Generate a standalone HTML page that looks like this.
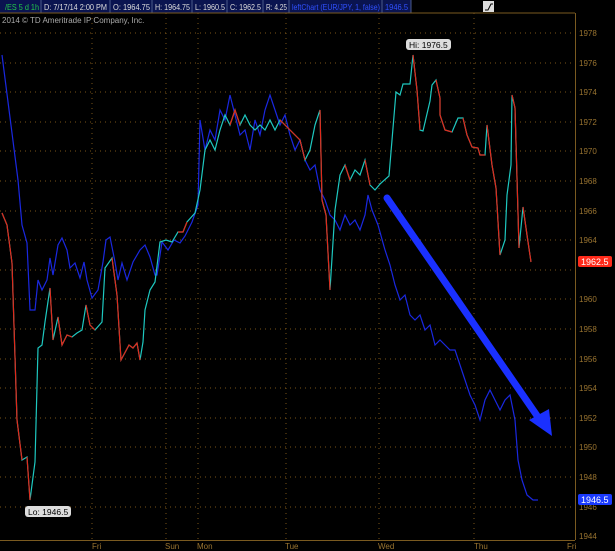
<!DOCTYPE html>
<html><head><style>
body{margin:0;background:#000;width:615px;height:551px;overflow:hidden;font-family:"Liberation Sans",sans-serif}
</style></head><body>
<svg width="615" height="551" xmlns="http://www.w3.org/2000/svg" style="position:absolute;left:0;top:0">
<rect width="615" height="551" fill="#000"/>
<!-- header -->
<rect x="0" y="0" width="411" height="13" fill="#0a1450"/>
<g stroke="#4a5a8a" stroke-width="1"><line x1="41" y1="0" x2="41" y2="13"/><line x1="110" y1="0" x2="110" y2="13"/><line x1="152" y1="0" x2="152" y2="13"/><line x1="192" y1="0" x2="192" y2="13"/><line x1="227" y1="0" x2="227" y2="13"/><line x1="263" y1="0" x2="263" y2="13"/><line x1="289" y1="0" x2="289" y2="13"/><line x1="382" y1="0" x2="382" y2="13"/><line x1="411" y1="0" x2="411" y2="13"/></g>
<g font-size="8.5" fill="#ddd">
<text x="5" y="10" fill="#22c84a" textLength="34" lengthAdjust="spacingAndGlyphs">/ES 5 d 1h</text>
<text x="44" y="10" textLength="63" lengthAdjust="spacingAndGlyphs">D: 7/17/14 2:00 PM</text>
<text x="113" y="10" textLength="37" lengthAdjust="spacingAndGlyphs">O: 1964.75</text>
<text x="155" y="10" textLength="35" lengthAdjust="spacingAndGlyphs">H: 1964.75</text>
<text x="195" y="10" textLength="30" lengthAdjust="spacingAndGlyphs">L: 1960.5</text>
<text x="230" y="10" textLength="31" lengthAdjust="spacingAndGlyphs">C: 1962.5</text>
<text x="266" y="10" textLength="21" lengthAdjust="spacingAndGlyphs">R: 4.25</text>
<text x="292" y="10" fill="#3050ff" textLength="88" lengthAdjust="spacingAndGlyphs">leftChart (EUR/JPY, 1, false)</text>
<text x="385" y="10" fill="#3050ff" textLength="23" lengthAdjust="spacingAndGlyphs">1946.5</text>
</g>
<rect x="483" y="1" width="11" height="11" fill="#ddd"/><path d="M485 10 L488 10 L491 4 L493 4" stroke="#000" fill="none"/>
<line x1="0" y1="13" x2="575" y2="13" stroke="#7a5a20"/>
<text x="2" y="23" font-size="8" fill="#aaa">2014 © TD Ameritrade IP Company, Inc.</text>
<!-- grid -->
<g stroke="#7a5418" stroke-dasharray="1,4" stroke-width="1">
<line x1="0" y1="33" x2="575" y2="33"/><line x1="0" y1="63" x2="575" y2="63"/><line x1="0" y1="92" x2="575" y2="92"/><line x1="0" y1="122" x2="575" y2="122"/><line x1="0" y1="151" x2="575" y2="151"/><line x1="0" y1="181" x2="575" y2="181"/><line x1="0" y1="211" x2="575" y2="211"/><line x1="0" y1="240" x2="575" y2="240"/><line x1="0" y1="270" x2="575" y2="270"/><line x1="0" y1="299" x2="575" y2="299"/><line x1="0" y1="329" x2="575" y2="329"/><line x1="0" y1="359" x2="575" y2="359"/><line x1="0" y1="388" x2="575" y2="388"/><line x1="0" y1="418" x2="575" y2="418"/><line x1="0" y1="447" x2="575" y2="447"/><line x1="0" y1="477" x2="575" y2="477"/><line x1="0" y1="507" x2="575" y2="507"/>
<line x1="92" y1="13" x2="92" y2="540"/><line x1="166" y1="13" x2="166" y2="540"/><line x1="198" y1="13" x2="198" y2="540"/><line x1="286" y1="13" x2="286" y2="540"/><line x1="379" y1="13" x2="379" y2="540"/><line x1="474" y1="13" x2="474" y2="540"/>
</g>
<!-- axis -->
<line x1="575.5" y1="13" x2="575.5" y2="540" stroke="#7a5a20"/>
<line x1="0" y1="540.5" x2="575" y2="540.5" stroke="#7a5a20"/>
<g font-size="8" fill="#9a7430">
<text x="579" y="36">1978</text><text x="579" y="66">1976</text><text x="579" y="95">1974</text><text x="579" y="125">1972</text><text x="579" y="154">1970</text><text x="579" y="184">1968</text><text x="579" y="214">1966</text><text x="579" y="243">1964</text><text x="579" y="302">1960</text><text x="579" y="332">1958</text><text x="579" y="362">1956</text><text x="579" y="391">1954</text><text x="579" y="421">1952</text><text x="579" y="450">1950</text><text x="579" y="480">1948</text><text x="579" y="510">1946</text><text x="579" y="539">1944</text>
<text x="92" y="549">Fri</text><text x="165" y="549">Sun</text><text x="197" y="549">Mon</text><text x="285" y="549">Tue</text><text x="378" y="549">Wed</text><text x="474" y="549">Thu</text><text x="567" y="549">Fri</text>
</g>
<rect x="578" y="256" width="34" height="11" rx="2" fill="#ff2a1a"/><text x="581" y="265" font-size="9" fill="#fff">1962.5</text>
<rect x="578" y="494" width="34" height="11" rx="2" fill="#1a3aff"/><text x="581" y="503" font-size="9" fill="#fff">1946.5</text>
<!-- blue line -->
<polyline fill="none" stroke="#1a28e0" stroke-width="1.2" points="2,55 18,180 22,225 27,243 30,310 35,310 38,280 42,290 47,280 50,258 53,275 58,245 62,238 67,250 70,268 75,263 80,278 84,262 87,280 92,298 98,290 103,262 106,240 110,237 115,262 118,280 122,263 127,280 133,262 140,250 145,245 150,257 155,275 157,275 162,242 168,250 174,240 180,243 185,236 192,222 198,205 200,120 205,150 210,130 215,140 220,110 225,120 230,95 235,115 240,135 245,130 250,150 255,120 260,135 265,110 270,95 275,110 280,125 285,115 290,135 295,150 300,140 305,160 310,170 315,165 320,190 325,200 330,215 335,220 340,230 345,215 350,225 355,220 360,230 365,215 368,195 372,210 378,225 385,250 390,265 395,285 400,300 405,295 410,315 415,320 420,315 425,330 430,325 435,345 440,340 445,345 450,350 455,350 460,365 465,380 470,395 475,405 480,420 485,400 490,390 495,400 500,410 505,400 510,395 515,420 518,460 522,480 527,495 533,500 538,500"/>
<!-- price line -->
<polyline fill="none" stroke="#1ec8c0" stroke-width="1.2" points="2,213 7,225 12,263 17,420 22,460 27,457 30,500 35,462 38,348 42,345 45,322 50,288 53,340 58,317 62,345 67,335 72,337 77,333 82,330 86,305 90,325 95,330 102,322 105,268 112,258 117,295 121,360 129,345 133,348 137,343 140,360 143,342 145,310 150,290 155,282 160,242 166,240 172,242 178,232 183,232 187,222 195,213 200,190 205,150 210,140 215,150 220,130 225,115 230,125 235,110 240,125 245,115 250,125 255,130 260,125 265,130 270,120 275,130 280,120 285,125 290,130 295,135 300,140 305,160 310,150 315,125 320,110 322,200 326,215 330,290 335,210 340,175 345,165 350,180 355,170 360,175 365,160 370,185 375,190 380,184 389,176 396,92 400,95 403,84 410,84 413,55 417,90 420,130 423,131 430,101 432,85 436,80 440,98 440,115 445,130 452,132 458,118 463,118 467,135 472,147 478,148 480,155 485,155 487,125 492,165 496,188 500,255 505,240 507,195 511,165 512,95 515,108 519,248 523,207 527,235 531,262"/>
<g fill="none" stroke="#e0281a" stroke-width="1.2">
<polyline points="2,213 7,225 12,263 17,420 22,460"/><polyline points="27,457 30,500"/>
<polyline points="50,288 53,340"/><polyline points="58,317 62,345 67,335 72,337"/><polyline points="86,305 90,325 95,330"/>
<polyline points="112,258 117,295 121,360 129,345 133,348 137,343 140,360"/>
<polyline points="178,232 183,232 187,222"/><polyline points="230,125 235,110 240,125"/><polyline points="280,120 285,125 290,130 295,135 300,140 305,160"/>
<polyline points="320,110 322,200 326,215 330,290"/><polyline points="345,165 350,180"/><polyline points="365,160 370,185"/>
<polyline points="413,55 417,90 420,130"/><polyline points="436,80 440,98 440,115 445,130 452,132"/><polyline points="463,118 467,135 472,147 478,148 480,155 485,155"/>
<polyline points="487,125 492,165 496,188 500,255"/><polyline points="512,95 515,108 519,248"/><polyline points="523,207 527,235 531,262"/>
</g>
<!-- labels -->
<rect x="406" y="39" width="45" height="11" rx="3" fill="#ddd"/><text x="409" y="48" font-size="8.5" fill="#000">Hi: 1976.5</text>
<rect x="25" y="506" width="46" height="11" rx="3" fill="#ddd"/><text x="28" y="515" font-size="8.5" fill="#000">Lo: 1946.5</text>
<!-- arrow -->
<line x1="387" y1="198" x2="540" y2="420" stroke="#1a30ff" stroke-width="7" stroke-linecap="round"/>
<polygon points="529,420 552,436 549,409" fill="#1a30ff"/>
</svg>
</body></html>
